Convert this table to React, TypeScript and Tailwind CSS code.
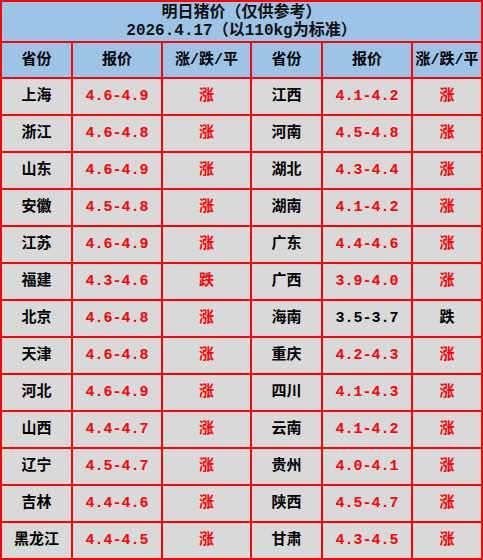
import React from "react";

type Row = [string, string, string, boolean];

const left: Row[] = [
  ["上海", "4.6-4.9", "涨", true],
  ["浙江", "4.6-4.8", "涨", true],
  ["山东", "4.6-4.9", "涨", true],
  ["安徽", "4.5-4.8", "涨", true],
  ["江苏", "4.6-4.9", "涨", true],
  ["福建", "4.3-4.6", "跌", true],
  ["北京", "4.6-4.8", "涨", true],
  ["天津", "4.6-4.8", "涨", true],
  ["河北", "4.6-4.9", "涨", true],
  ["山西", "4.4-4.7", "涨", true],
  ["辽宁", "4.5-4.7", "涨", true],
  ["吉林", "4.4-4.6", "涨", true],
  ["黑龙江", "4.4-4.5", "涨", true],
];

const right: Row[] = [
  ["江西", "4.1-4.2", "涨", true],
  ["河南", "4.5-4.8", "涨", true],
  ["湖北", "4.3-4.4", "涨", true],
  ["湖南", "4.1-4.2", "涨", true],
  ["广东", "4.4-4.6", "涨", true],
  ["广西", "3.9-4.0", "涨", true],
  ["海南", "3.5-3.7", "跌", false],
  ["重庆", "4.2-4.3", "涨", true],
  ["四川", "4.1-4.3", "涨", true],
  ["云南", "4.1-4.2", "涨", true],
  ["贵州", "4.0-4.1", "涨", true],
  ["陕西", "4.5-4.7", "涨", true],
  ["甘肃", "4.3-4.5", "涨", true],
];

const headers = ["省份", "报价", "涨/跌/平", "省份", "报价", "涨/跌/平"];

const font = { fontFamily: '"Liberation Mono", "Noto Sans CJK SC", monospace' };

export default function App() {
  return (
    <div
      className="w-[483px] h-[560px] bg-[#ff0000] p-[2px] grid grid-cols-[69px_88px_87px_69px_88px_68px] grid-rows-[39px_34px_repeat(13,35px)] gap-[2px] font-bold text-[15px] leading-none"
      style={font}
    >
      <div className="col-span-6 bg-[#9dc3e6] flex flex-col items-center justify-center text-[16px] text-[#111] leading-[18px]">
        <div>明日猪价（仅供参考）</div>
        <div>2026.4.17（以110kg为标准）</div>
      </div>
      {headers.map((h, i) => (
        <div key={i} className="bg-[#9dc3e6] flex items-center justify-center text-black whitespace-nowrap">
          {h}
        </div>
      ))}
      {left.map((l, i) => {
        const r = right[i];
        return (
          <React.Fragment key={i}>
            <div className="bg-[#d9d9d9] flex items-center justify-center text-black">{l[0]}</div>
            <div className={`bg-[#d9d9d9] flex items-center justify-center ${l[3] ? "text-[#ff0000]" : "text-black"}`}>{l[1]}</div>
            <div className={`bg-[#d9d9d9] flex items-center justify-center ${l[3] ? "text-[#ff0000]" : "text-black"}`}>{l[2]}</div>
            <div className="bg-[#d9d9d9] flex items-center justify-center text-black">{r[0]}</div>
            <div className={`bg-[#d9d9d9] flex items-center justify-center ${r[3] ? "text-[#ff0000]" : "text-black"}`}>{r[1]}</div>
            <div className={`bg-[#d9d9d9] flex items-center justify-center ${r[3] ? "text-[#ff0000]" : "text-black"}`}>{r[2]}</div>
          </React.Fragment>
        );
      })}
    </div>
  );
}
